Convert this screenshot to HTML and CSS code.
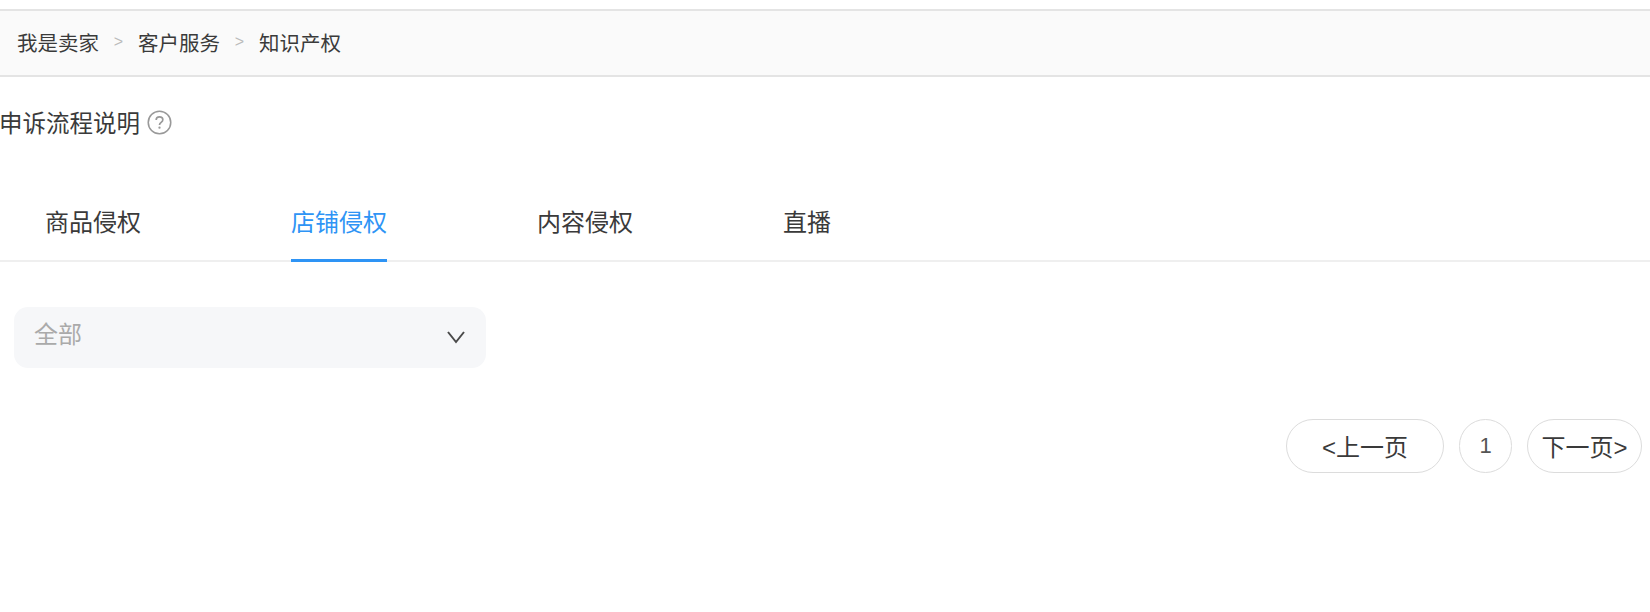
FILE: index.html
```html
<!DOCTYPE html>
<html lang="zh-CN">
<head>
  <meta charset="UTF-8">
  <title>知识产权</title>
  <link rel="stylesheet" href="styles.css">
</head>
<body>

  <div class="crumbs">
    <span class="crumb">我是卖家</span>
    <span class="crumb-sep">&gt;</span>
    <span class="crumb">客户服务</span>
    <span class="crumb-sep">&gt;</span>
    <span class="crumb">知识产权</span>
  </div>

  <div class="title">
    <span>申诉流程说明</span>
    <svg class="help-icon" width="25" height="25" viewBox="0 0 24 24" fill="none">
      <circle cx="12" cy="12" r="10.8" stroke="#999" stroke-width="1.500"/>
      <path d="M8.8 9.6c0-1.9 1.4-3 3.2-3s3.2 1.1 3.2 2.8c0 2.400-3.200 2.500-3.200 4.900" stroke="#999" stroke-width="1.600"/>
      <circle cx="12" cy="17" r="1.100" fill="#999"/>
    </svg>
  </div>

  <div class="tabs">
    <div class="tab">商品侵权</div>
    <div class="tab active">店铺侵权</div>
    <div class="tab">内容侵权</div>
    <div class="tab">直播</div>
  </div>

  <div class="select">
    <span class="select-value">全部</span>
    <svg class="select-arrow" width="20" height="14" viewBox="0 0 20 14" fill="none">
      <path d="M2 2l8 10 8-10" stroke="#4a4a4a" stroke-width="2"/>
    </svg>
  </div>

  <div class="pager">
    <div class="page-btn prev">&lt;上一页</div>
    <div class="page-btn num">1</div>
    <div class="page-btn next">下一页&gt;</div>
  </div>

</body>
</html>
```

FILE: styles.css
```css
body {
  margin: 0;
  padding-top: 9px;
  height: 603px;
  overflow: hidden;
  background-color: #fff;
  font-family: "Liberation Sans", "Noto Sans CJK SC", sans-serif;
  color: #3a3a3a;
}

/* Breadcrumb bar */
.crumbs {
  display: flex;
  align-items: center;
  gap: 13px;
  height: 62px;
  padding-left: 17px;
  padding-bottom: 2px;
  background-color: #fafafa;
  border-top: 2px solid #e4e4e4;
  border-bottom: 2px solid #e4e4e4;
  font-size: 20.500px;
}

.crumb-sep {
  width: 13px;
  font-size: 16px;
  color: #bbb;
  text-align: center;
}

/* Title row */
.title {
  display: flex;
  align-items: center;
  gap: 7px;
  height: 34px;
  margin-top: 28px;
  margin-left: -1px;
  font-size: 23.500px;
}

/* Tabs */
.tabs {
  display: flex;
  height: 94px;
  margin-top: 27px;
  border-bottom: 2px solid #efefef;
  padding-left: 45px;
}

.tab {
  margin-right: 150px;
  padding-top: 40px;
  height: 53px;
  font-size: 24px;
  line-height: 34px;
}

.tab.active {
  color: #2e94f5;
  border-bottom: 3px solid #2e94f5;
}

/* Dropdown */
.select {
  display: flex;
  align-items: center;
  justify-content: space-between;
  width: 472px;
  height: 61px;
  box-sizing: border-box;
  margin: 45px 0 0 14px;
  padding: 0 20px;
  background-color: #f6f7f9;
  border-radius: 14px;
  font-size: 24px;
}

.select-value {
  color: #aaa;
  margin-top: -10px;
}

.select-arrow {
  margin-top: -1px;
}

/* Pagination */
.pager {
  display: flex;
  justify-content: flex-end;
  gap: 15px;
  margin-top: 51px;
  padding-right: 8px;
}

.page-btn {
  display: flex;
  align-items: center;
  justify-content: center;
  height: 54px;
  box-sizing: border-box;
  padding-bottom: 2px;
  border: 1.500px solid #dcdcdc;
  border-radius: 27px;
  font-size: 24px;
}

.prev {
  width: 158px;
}

.num {
  width: 53px;
  padding-bottom: 0;
  font-size: 22px;
  color: #555;
}

.next {
  width: 115px;
}
```
